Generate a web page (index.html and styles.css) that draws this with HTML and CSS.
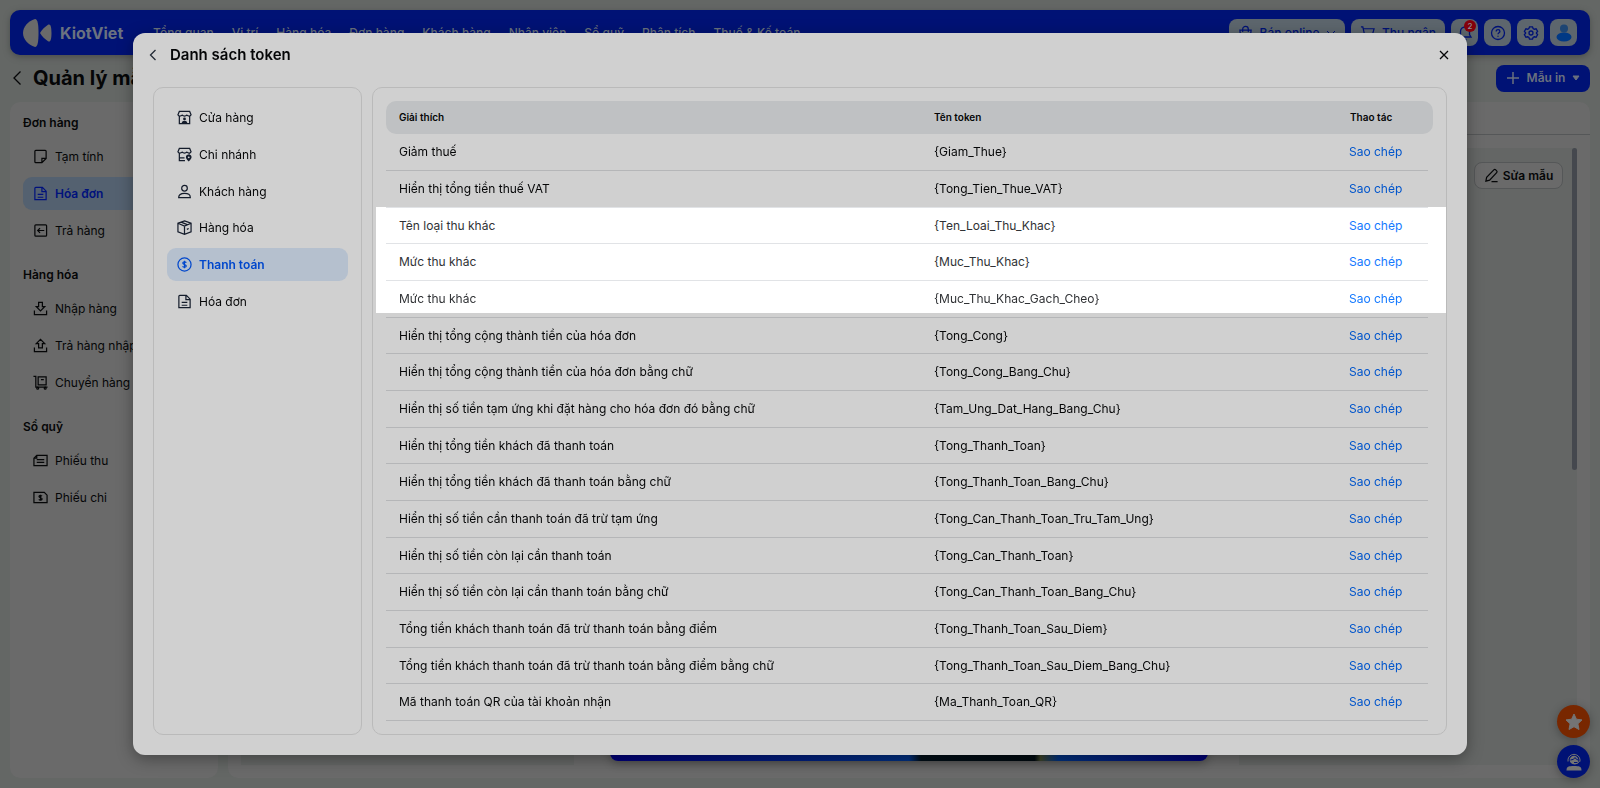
FILE: index.html
```html
<!DOCTYPE html>
<html lang="vi">
<head>
    <meta charset="UTF-8">
    <meta name="viewport" content="width=device-width, initial-scale=1.0">
    <title>Danh sách token</title>
    <link rel="stylesheet" href="styles.css">
</head>
<body>
    <div class="page">
        <header class="navbar">
            <div class="logo">
                <svg width="29" height="28" viewBox="0 0 29 28" fill="currentColor"><path d="M12 0C5 2 0 8 0 14s5 12 12 14c3 0 3.500-7 3.500-14S15 0 12 0z"/><path d="M25 5.800c2.500-1.500 3.500 2 3.500 8.200s-1 9.700-3.500 8.200c-3-2-6-4.700-8-8.200 2-3.500 5-6.200 8-8.200z"/></svg>
                <span>KiotViet</span>
            </div>
            <nav class="menu">
                <a href="#">Tổng quan</a>
                <a href="#">Vị trí</a>
                <a href="#">Hàng hóa</a>
                <a href="#">Đơn hàng</a>
                <a href="#">Khách hàng</a>
                <a href="#">Nhân viên</a>
                <a href="#">Sổ quỹ</a>
                <a href="#">Phân tích</a>
                <a href="#">Thuế &amp; Kế toán</a>
            </nav>
            <div class="tools">
                <button class="tool online"><svg class="icon" viewBox="0 0 16 16"><path d="M2 5.500h12l-1 9H3zM5 7.500v-3c0-4 6-4 6 0v3"/></svg>Bán online<svg class="caret-line" viewBox="0 0 10 10"><path d="M1 3l4 4 4-4"/></svg></button>
                <button class="tool cashier"><svg class="icon" viewBox="0 0 16 16"><path d="M1 2h2l2 9h8l2-7H4"/><circle cx="6" cy="14" r="1"/><circle cx="12" cy="14" r="1"/></svg>Thu ngân</button>
                <button class="tool square" aria-label="Thông báo"><svg class="icon" viewBox="0 0 16 16"><path d="M2 12h12l-1.500-2.500V6.500a4.500 4.500 0 0 0-9 0v3zM6.500 14.500h3"/></svg><span class="count">2</span></button>
                <button class="tool square" aria-label="Trợ giúp"><svg class="icon" viewBox="0 0 16 16"><circle cx="8" cy="8" r="6.500"/><path d="M6.200 6.400c0-2.400 3.700-2.300 3.700 0 0 1.300-1.900 1.400-1.900 2.900M8 10.800v1"/></svg></button>
                <button class="tool square" aria-label="Thiết lập"><svg class="icon" viewBox="0 0 16 16"><path d="M6.500 1.800h3l.6 1.700 1.200.7 1.800-.4 1.500 2.600-1.200 1.300v.6l1.200 1.300-1.500 2.600-1.800-.4-1.200.7-.6 1.700h-3l-.6-1.700-1.200-.7-1.800.4-1.500-2.600 1.200-1.300v-.6L1.400 6.400l1.500-2.600 1.800.4 1.200-.7z"/><circle cx="8" cy="8" r="2"/></svg></button>
                <button class="tool square" aria-label="Tài khoản"><svg width="16" height="18" viewBox="0 0 16 18"><circle cx="8" cy="4.500" r="4" fill="#1d4573"/><ellipse cx="8" cy="13" rx="7.500" ry="4.500" fill="#003985"/></svg></button>
            </div>
        </header>

        <div class="title-bar">
            <button class="back" aria-label="Quay lại"><svg width="10" height="16" viewBox="0 0 10 16"><path d="M8.500 1.500L2 8l6.500 6.500"/></svg></button>
            <h1>Quản lý mẫu in</h1>
            <button class="btn-add"><svg width="14" height="14" viewBox="0 0 14 14"><path d="M7 1v12M1 7h12" stroke-width="1.500"/></svg>Mẫu in<svg width="8" height="6" viewBox="0 0 8 6"><path d="M1 1h6L4 5z" fill="currentColor"/></svg></button>
        </div>

        <div class="content">
            <aside class="sidebar">
                <h2>Đơn hàng</h2>
                <a href="#"><svg class="icon" viewBox="0 0 16 16"><path d="M3 1.500h10q1 0 1 1V10l-4.500 4.500H3q-1 0-1-1v-11q0-1 1-1zM14 10H9.500v4.500"/></svg>Tạm tính</a>
                <a href="#" class="active"><svg class="icon" viewBox="0 0 16 16"><path d="M3 1.500h7l4 4v9H2v-12q0-1 1-1zM9.500 1.500V6H14M5 9h6M5 12h6"/></svg>Hóa đơn</a>
                <a href="#"><svg class="icon" viewBox="0 0 16 16"><rect x="2" y="2" width="12.500" height="12" rx="1"/><path d="M12 8H5M7.500 5.500L5 8l2.500 2.500"/></svg>Trả hàng</a>
                <h2>Hàng hóa</h2>
                <a href="#"><svg class="icon" viewBox="0 0 16 16"><path d="M1.500 10v4.500h13V10M6 1.500h4V6h2.500L8 10.500 3.500 6H6z"/></svg>Nhập hàng</a>
                <a href="#"><svg class="icon" viewBox="0 0 16 16"><path d="M1.500 10v4.500h13V10M6 10.500h4V6h2.500L8 1.500 3.500 6H6z"/></svg>Trả hàng nhập</a>
                <a href="#"><svg class="icon" viewBox="0 0 16 16"><path d="M.5 1.500H3V13h12.500M5.500 2H14v8.500H5.500zM8.500 5h3"/><circle cx="5" cy="14" r="1"/><circle cx="13" cy="14" r="1"/></svg>Chuyển hàng</a>
                <h2>Sổ quỹ</h2>
                <a href="#"><svg class="icon" viewBox="0 0 16 16"><path d="M4 2.500h11v11H1V5.500zM4 7h8M4 10h8M1 5.500h3v-3"/></svg>Phiếu thu</a>
                <a href="#"><svg class="icon" viewBox="0 0 16 16"><path d="M1 2.500h11l3 3v8H1zM9.700 6.500C8 5.300 6 6 6.500 7.300s3.300.7 3.200 2.200-2.500 1.700-3.500.5M8 5v6.500"/></svg>Phiếu chi</a>
            </aside>
            <main class="panel">
                <div class="tabs"></div>
                <div class="preview">
                    <div class="sheet"><div class="banner"></div></div>
                    <button class="btn-edit"><svg class="icon" viewBox="0 0 16 16"><path d="M2 14l.8-4L10.500 2q1-1 2 0l1 1q1 1 0 2L6 13zM8 14.500h6.500"/></svg>Sửa mẫu</button>
                    <div class="scroll-thumb"></div>
                </div>
            </main>
        </div>
        <div class="floating">
            <button class="star" aria-label="Đánh giá"><svg width="20" height="20" viewBox="0 0 20 20"><path d="M10 2l2.400 5.200 5.600.7-4.100 3.900 1.100 5.700-5-2.800-5 2.800 1.100-5.700L2 7.900l5.600-.7z" fill="currentColor" stroke="currentColor" stroke-linejoin="round"/></svg></button>
            <button class="support" aria-label="Hỗ trợ"><svg width="18" height="18" viewBox="0 0 18 18" fill="currentColor"><path d="M1.500 17.500c0-4 2-4.500 7.500-4.500s7.500.5 7.500 4.500z"/><circle cx="9" cy="7" r="4.300"/><path d="M3 8.500C2-1 16-1 15 8.500M14.500 8q-1 3-5 3" fill="none" stroke="currentColor"/><path d="M5.500 7Q9 7 10 4.500q1 2 3 2.500M9 9.500h3" fill="none" stroke="#001275"/></svg></button>
        </div>
    </div>

    <div class="modal" role="dialog" aria-labelledby="modal-title">
        <div class="modal-header">
            <button class="back" aria-label="Quay lại"><svg width="8" height="12" viewBox="0 0 8 12"><path d="M6.500 1L1.500 6l5 5"/></svg></button>
            <h2 id="modal-title">Danh sách token</h2>
            <button class="close" aria-label="Đóng"><svg width="10" height="10" viewBox="0 0 10 10"><path d="M1 1l8 8M9 1L1 9"/></svg></button>
        </div>
        <div class="modal-body">
            <nav class="groups">
                <a href="#"><svg class="icon" viewBox="0 0 16 16"><path d="M2.500 1.500h11L15 5q-.5 1.500-2 1.500T10.500 5.500Q9.500 6.500 8 6.500T5.500 5.500Q4.500 6.500 3 6.500T1 5zM2.500 7v7.500h11V7"/><path d="M5 14.500q0-3 3-3t3 3z" fill="currentColor" stroke="none"/><circle cx="8" cy="9.500" r="1.500" fill="currentColor" stroke="none"/></svg>Cửa hàng</a>
                <a href="#"><svg class="icon" viewBox="0 0 16 16"><path d="M2.500 1.500h11L15 5q-.5 1.500-2 1.500T10.500 5.500Q9.500 6.500 8 6.500T5.500 5.500Q4.500 6.500 3 6.500T1 5zM2.500 7v7.500h6M3 11.500h5M13 7v1"/><path d="M12.500 15.500C10 13 9.500 12 9.500 11a3 3 0 0 1 6 0c0 1-.5 2-3 4.500z" fill="currentColor" stroke="none"/><circle cx="12.500" cy="11" r="1" fill="#d0d0d0" stroke="none"/></svg>Chi nhánh</a>
                <a href="#"><svg class="icon" viewBox="0 0 16 16"><circle cx="8" cy="4.500" r="3"/><path d="M1.800 14.500c0-3.500 2.200-4.500 6.200-4.500s6.200 1 6.200 4.500z"/></svg>Khách hàng</a>
                <a href="#"><svg class="icon" viewBox="0 0 16 16"><path d="M8 1l7 2.500v9L8 15.200 1 12.500v-9zM1 3.500l7 3 7-3M8 6.500v8.500M4.500 2.300l7 2.900M10.500 10l2-1"/></svg>Hàng hóa</a>
                <a href="#" class="active"><svg class="icon" viewBox="0 0 16 16"><circle cx="8" cy="8" r="7"/><path d="M10 6C8.800 4.700 6 5 6.200 6.600S10 8 9.900 9.600 7 11.300 5.900 10M8 4v8"/></svg>Thanh toán</a>
                <a href="#"><svg class="icon" viewBox="0 0 16 16"><path d="M3 1.500h7l4 4v9H2v-12q0-1 1-1zM9.500 1.500V6H14M5 9h6M5 12h6"/></svg>Hóa đơn</a>
            </nav>
            <div class="table-box">
                <table>
                    <thead>
                        <tr><th class="desc">Giải thích</th><th class="name">Tên token</th><th class="act">Thao tác</th></tr>
                    </thead>
                    <tbody>
                        <tr><td>Giảm thuế</td><td>{Giam_Thue}</td><td><a href="#">Sao chép</a></td></tr>
                        <tr class="light-line"><td>Hiển thị tổng tiền thuế VAT</td><td>{Tong_Tien_Thue_VAT}</td><td><a href="#">Sao chép</a></td></tr>
                        <tr class="bright light-line"><td>Tên loại thu khác</td><td>{Ten_Loai_Thu_Khac}</td><td><a href="#">Sao chép</a></td></tr>
                        <tr class="bright light-line"><td>Mức thu khác</td><td>{Muc_Thu_Khac}</td><td><a href="#">Sao chép</a></td></tr>
                        <tr class="bright"><td>Mức thu khác</td><td>{Muc_Thu_Khac_Gach_Cheo}</td><td><a href="#">Sao chép</a></td></tr>
                        <tr><td>Hiển thị tổng cộng thành tiền của hóa đơn</td><td>{Tong_Cong}</td><td><a href="#">Sao chép</a></td></tr>
                        <tr><td>Hiển thị tổng cộng thành tiền của hóa đơn bằng chữ</td><td>{Tong_Cong_Bang_Chu}</td><td><a href="#">Sao chép</a></td></tr>
                        <tr><td>Hiển thị số tiền tạm ứng khi đặt hàng cho hóa đơn đó bằng chữ</td><td>{Tam_Ung_Dat_Hang_Bang_Chu}</td><td><a href="#">Sao chép</a></td></tr>
                        <tr><td>Hiển thị tổng tiền khách đã thanh toán</td><td>{Tong_Thanh_Toan}</td><td><a href="#">Sao chép</a></td></tr>
                        <tr><td>Hiển thị tổng tiền khách đã thanh toán bằng chữ</td><td>{Tong_Thanh_Toan_Bang_Chu}</td><td><a href="#">Sao chép</a></td></tr>
                        <tr><td>Hiển thị số tiền cần thanh toán đã trừ tạm ứng</td><td>{Tong_Can_Thanh_Toan_Tru_Tam_Ung}</td><td><a href="#">Sao chép</a></td></tr>
                        <tr><td>Hiển thị số tiền còn lại cần thanh toán</td><td>{Tong_Can_Thanh_Toan}</td><td><a href="#">Sao chép</a></td></tr>
                        <tr><td>Hiển thị số tiền còn lại cần thanh toán bằng chữ</td><td>{Tong_Can_Thanh_Toan_Bang_Chu}</td><td><a href="#">Sao chép</a></td></tr>
                        <tr><td>Tổng tiền khách thanh toán đã trừ thanh toán bằng điểm</td><td>{Tong_Thanh_Toan_Sau_Diem}</td><td><a href="#">Sao chép</a></td></tr>
                        <tr><td>Tổng tiền khách thanh toán đã trừ thanh toán bằng điểm bằng chữ</td><td>{Tong_Thanh_Toan_Sau_Diem_Bang_Chu}</td><td><a href="#">Sao chép</a></td></tr>
                        <tr><td>Mã thanh toán QR của tài khoản nhận</td><td>{Ma_Thanh_Toan_QR}</td><td><a href="#">Sao chép</a></td></tr>
                    </tbody>
                </table>
                <!-- keeps the selected rows at full brightness -->
                <div class="spotlight"></div>
            </div>
        </div>
    </div>
</body>
</html>
```

FILE: styles.css
```css
* {
    margin: 0;
    padding: 0;
    box-sizing: border-box;
}
body {
    font-family: Inter, "Liberation Sans", sans-serif;
    font-size: 12px;
    line-height: 16px;
    color: #050607;
    background: #646765;
}
a {
    color: inherit;
    text-decoration: none;
}
button {
    font: inherit;
    color: inherit;
    background: none;
    border: none;
    cursor: pointer;
}
svg {
    flex: none;
}
.icon {
    width: 15px;
    height: 15px;
    fill: none;
    stroke: currentColor;
    stroke-width: 1.3;
}
.page {
    height: 100vh;
    padding: 10px;
    display: flex;
    flex-direction: column;
    overflow: hidden;
}

/* Top bar */
.navbar {
    display: flex;
    align-items: center;
    height: 45px;
    padding: 0 13px;
    border-radius: 10px;
    background: #001275;
    color: #69717c;
    box-shadow: 0 2px 6px #4a4e4c;
}
.logo {
    display: flex;
    align-items: center;
    gap: 8px;
    width: 130px;
    font-size: 16px;
    font-weight: 700;
    color: #6b7280;
}
.logo svg {
    color: #6a6a6a;
}
.menu {
    display: flex;
    gap: 18px;
    font-weight: 500;
    white-space: nowrap;
}
.tools {
    display: flex;
    gap: 6px;
    margin-left: auto;
}
.tool {
    position: relative;
    display: flex;
    align-items: center;
    justify-content: center;
    gap: 7px;
    height: 27px;
    border-radius: 8px;
    background: #5d666d;
    color: #001275;
    font-weight: 500;
}
.online {
    width: 116px;
}
.cashier {
    width: 94px;
}
.square {
    width: 27px;
}
.square .icon {
    width: 16px;
    height: 16px;
}
.caret-line {
    width: 10px;
    height: 10px;
    fill: none;
    stroke: currentColor;
}
.count {
    position: absolute;
    top: 1px;
    right: 2px;
    width: 12px;
    height: 12px;
    border-radius: 50%;
    background: #84000b;
    color: #8b9199;
    font-size: 8px;
    line-height: 12px;
}

/* Page title */
.title-bar {
    display: flex;
    align-items: center;
    height: 47px;
    padding: 0 0 1px 2px;
}
.back,
.close {
    display: flex;
    align-items: center;
}
.back svg,
.close svg {
    fill: none;
    stroke: currentColor;
    stroke-width: 1.3;
}
h1 {
    margin-left: 11px;
    font-size: 20px;
    line-height: 28px;
    font-weight: 700;
}
.btn-add {
    display: flex;
    align-items: center;
    justify-content: center;
    gap: 7px;
    width: 94px;
    height: 27px;
    margin-left: auto;
    border-radius: 8px;
    background: #001275;
    color: #6a707e;
    font-weight: 600;
}
.btn-add svg {
    stroke: currentColor;
}

/* Sidebar and preview */
.content {
    flex: 1;
    display: flex;
    gap: 10px;
    min-height: 0;
}
.sidebar {
    width: 208px;
    padding: 13px;
    border-radius: 10px;
    background: #6a6a6a;
}
.sidebar h2 {
    font-size: 12px;
    font-weight: 600;
    margin-bottom: 9px;
}
.sidebar h2:not(:first-child) {
    margin-top: 20px;
}
.sidebar a,
.groups a {
    display: flex;
    align-items: center;
    gap: 7px;
    height: 33px;
    margin-bottom: 4px;
    padding: 0 10px;
    border-radius: 9px;
}
.sidebar .active {
    background: #546170;
    color: #00127c;
    font-weight: 600;
}
.panel {
    flex: 1;
    display: flex;
    flex-direction: column;
    padding: 0 13px 13px 13px;
    border-radius: 10px;
    background: #6a6a6a;
}
.tabs {
    height: 33px;
    margin: 0 -13px 13px;
    border-bottom: 1px solid #555758;
}
.preview {
    position: relative;
    flex: 1;
    display: flex;
    justify-content: center;
    padding-right: 5px;
    background: #646665;
}
.sheet {
    width: 50%;
    display: flex;
    align-items: flex-end;
    padding: 0 31px 4px 36px;
    background: #6a6a6a;
}
.banner {
    width: 100%;
    height: 60px;
    border-radius: 8px;
    background: linear-gradient(to right, #000078, #003080 50%, #000e17 52%, #000a10 71%, #3c4228 72%, #00307c 75%, #000074);
    box-shadow: 0 3px 8px rgba(0, 0, 0, 0.25);
}
.btn-edit {
    position: absolute;
    top: 14px;
    right: 14px;
    display: flex;
    align-items: center;
    justify-content: center;
    gap: 4px;
    width: 89px;
    height: 27px;
    border: 1px solid #555758;
    border-radius: 8px;
    background: #6a6a6a;
    font-weight: 600;
}
.scroll-thumb {
    position: absolute;
    top: 0;
    right: 0;
    width: 5px;
    height: 322px;
    border-radius: 3px;
    background: #45484e;
}
.floating {
    position: fixed;
    right: 10px;
    bottom: 10px;
    display: flex;
    flex-direction: column;
    gap: 7px;
}
.floating button {
    display: flex;
    align-items: center;
    justify-content: center;
    width: 33px;
    height: 33px;
    border-radius: 50%;
    color: #747474;
    box-shadow: 0 2px 10px rgba(0, 0, 0, 0.3);
}
.floating .star {
    background: #782700;
}
.floating .support {
    background: #001275;
}

/* Token dialog */
.modal {
    position: fixed;
    top: 33px;
    left: 50%;
    transform: translateX(-50%);
    width: calc(100% - 266px);
    padding: 0 20px 20px;
    border-radius: 12px;
    background: #d0d0d0;
    box-shadow: 0 4px 16px rgba(0, 0, 0, 0.35);
}
.modal-header {
    display: flex;
    align-items: center;
    height: 44px;
    margin-bottom: 10px;
}
.modal-header .back {
    margin-left: -4px;
    color: #222a35;
}
.modal-header h2 {
    margin-left: 13px;
    font-size: 15px;
    font-weight: 600;
}
.close {
    margin: 0 -2px 0 auto;
}
.modal-body {
    display: flex;
    gap: 10px;
}
.groups,
.table-box {
    padding: 13px;
    border: 1px solid #bababa;
    border-radius: 10px;
}
.groups {
    width: 209px;
}
.groups .icon {
    color: #141c2b;
}
.groups a:nth-child(3n) {
    margin-bottom: 3px;
}
.groups .active,
.groups .active .icon {
    color: #0047cc;
    font-weight: 600;
}
.groups .active {
    background: #b5c0ce;
}
.table-box {
    position: relative;
    flex: 1;
}
table {
    width: 100%;
    border-collapse: separate;
    border-spacing: 0;
    table-layout: fixed;
}
th {
    height: 33px;
    padding: 0 0 1px 13px;
    background: #bfc1c3;
    font-size: 10px;
    font-weight: 600;
    text-align: left;
}
th:first-child {
    border-radius: 10px 0 0 10px;
}
th:last-child {
    border-radius: 0 10px 10px 0;
}
.name {
    width: 416px;
}
.act {
    width: 96px;
}
td {
    position: relative;
    z-index: 1;
    height: 37px;
    padding: 0 0 1px 13px;
    background: linear-gradient(#b5b6b8, #b5b6b8) left bottom / 100% 1px no-repeat;
}
tr:nth-child(3n) td {
    height: 36px;
}
td:last-child {
    padding-left: 12px;
    background-size: calc(100% - 5px) 1px;
}
td a {
    color: #0055cc;
}
.light-line td {
    background-image: linear-gradient(#e1e3e6, #e1e3e6);
}
.bright td {
    color: #303235;
}
.bright a {
    color: #1479ff;
}
.spotlight {
    position: absolute;
    top: 119px;
    left: 3px;
    right: 0;
    height: 106px;
    background: #fff;
}
```
